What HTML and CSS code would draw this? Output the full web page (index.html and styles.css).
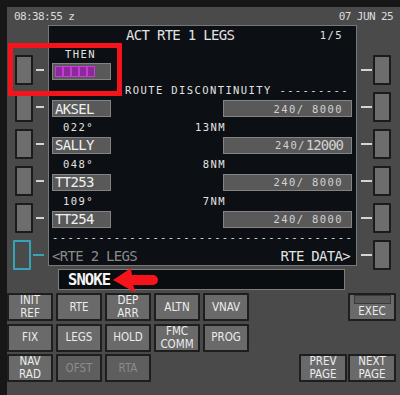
FILE: index.html
```html
<!DOCTYPE html>
<html lang="en">
<head>
    <meta charset="UTF-8">
    <meta name="viewport" content="width=device-width, initial-scale=1.0">
    <title>CDU – ACT RTE 1 LEGS</title>
    <link rel="stylesheet" href="styles.css">
</head>
<body>

    <div class="cdu">
        <div class="status">
            <span>08:38:55 z</span>
            <span>07 JUN 25</span>
        </div>

        <div class="main">
            <div class="lsk-col left">
                <div class="lsk"><span class="lsk-btn"></span><span class="dash"></span></div>
                <div class="lsk"><span class="lsk-btn"></span><span class="dash"></span></div>
                <div class="lsk"><span class="lsk-btn"></span><span class="dash"></span></div>
                <div class="lsk"><span class="lsk-btn"></span><span class="dash"></span></div>
                <div class="lsk"><span class="lsk-btn"></span><span class="dash"></span></div>
                <div class="lsk sel"><span class="lsk-btn"></span><span class="dash"></span></div>
            </div>

            <div class="screen">
                <div class="row">
                    <span class="lg title">ACT RTE 1 LEGS</span>
                    <span class="sm page">1/5</span>
                </div>
                <div class="row"><span class="sm then">THEN</span></div>
                <div class="row">
                    <span class="field boxes"><i></i><i></i><i></i><i></i><i></i></span>
                </div>
                <div class="row"><span class="sm disc">ROUTE DISCONTINUITY ---------</span></div>
                <div class="row">
                    <span class="field lg">AKSEL</span>
                    <span class="field alt sm">240/ 8000</span>
                </div>
                <div class="row"><span class="sm crs">022°</span><span class="sm dist">13NM</span></div>
                <div class="row">
                    <span class="field lg">SALLY</span>
                    <span class="field alt sm">240/<span class="lg">12000</span></span>
                </div>
                <div class="row"><span class="sm crs">048°</span><span class="sm dist">8NM</span></div>
                <div class="row">
                    <span class="field lg">TT253</span>
                    <span class="field alt sm">240/ 8000</span>
                </div>
                <div class="row"><span class="sm crs">109°</span><span class="sm dist">7NM</span></div>
                <div class="row">
                    <span class="field lg">TT254</span>
                    <span class="field alt sm">240/ 8000</span>
                </div>
                <div class="row"><span class="sm dashes">---------------------------------------</span></div>
                <div class="row">
                    <span class="lg dim">&lt;RTE 2 LEGS</span>
                    <span class="lg rte-data">RTE DATA&gt;</span>
                </div>
            </div>

            <div class="lsk-col right">
                <div class="lsk"><span class="dash"></span><span class="lsk-btn"></span></div>
                <div class="lsk"><span class="dash"></span><span class="lsk-btn"></span></div>
                <div class="lsk"><span class="dash"></span><span class="lsk-btn"></span></div>
                <div class="lsk"><span class="dash"></span><span class="lsk-btn"></span></div>
                <div class="lsk"><span class="dash"></span><span class="lsk-btn"></span></div>
                <div class="lsk"><span class="dash"></span><span class="lsk-btn"></span></div>
            </div>
        </div>

        <div class="scratch-row">
            <div class="scratchpad">SNOKE</div>
        </div>

        <div class="keypad">
            <div class="fn-keys">
                <div class="key">INIT<br>REF</div>
                <div class="key">RTE</div>
                <div class="key">DEP<br>ARR</div>
                <div class="key">ALTN</div>
                <div class="key">VNAV</div>
                <div class="key">FIX</div>
                <div class="key">LEGS</div>
                <div class="key">HOLD</div>
                <div class="key">FMC<br>COMM</div>
                <div class="key">PROG</div>
                <div class="key">NAV<br>RAD</div>
                <div class="key off">OFST</div>
                <div class="key off">RTA</div>
            </div>
            <div class="page-keys">
                <div class="key exec"><span class="exec-light"></span>EXEC</div>
                <div class="key prev">PREV<br>PAGE</div>
                <div class="key next">NEXT<br>PAGE</div>
            </div>
        </div>

        <div class="mark-box"></div>
        <svg class="mark-arrow" width="56" height="34" viewBox="108 262 56 34">
            <path d="M113 280 L131 268 L132 275 L153 275 A5 5 0 0 1 153 285 L133 285 L136 293 Z" fill="#f5141b"/>
        </svg>
    </div>

</body>
</html>
```

FILE: styles.css
```css
body {
    margin: 0;
    padding: 0;
    background-color: #171717;
    width: 400px;
    height: 395px;
    overflow: hidden;
}
.cdu {
    position: relative;
    margin: 7px 0 0 7px;
    width: 393px;
    height: 388px;
    background-color: #4a4a4a;
    font-family: 'DejaVu Sans Mono', monospace;
}
.status {
    height: 18px;
    display: flex;
    justify-content: space-between;
    align-items: center;
    padding: 0 7px;
    font-size: 11px;
    letter-spacing: -0.6px;
    color: #dcdcdc;
}
.main {
    display: flex;
    height: 241px;
}
.lsk-col {
    display: flex;
    flex-direction: column;
    gap: 7px;
    padding-top: 30px;
}
.lsk-col.left {
    width: 41px;
}
.lsk-col.right {
    width: 43px;
}
.lsk {
    height: 30px;
    display: flex;
    align-items: center;
    flex-shrink: 0;
}
.lsk-btn {
    width: 18px;
    height: 30px;
    box-sizing: border-box;
    background-color: #6d6d6d;
    border: 2px solid #1b1b1b;
    border-radius: 1px;
}
.left .lsk-btn {
    margin-left: 8px;
}
.left .dash {
    margin-left: 3px;
    width: 8px;
}
.right .dash {
    margin-left: 4px;
    margin-right: 1px;
    width: 11px;
}
.dash {
    height: 2px;
    background-color: #d4d4d4;
}
.lsk.sel .lsk-btn {
    margin-left: 6px;
    background-color: transparent;
    border: 2px solid #35a3b8;
}
.lsk.sel .dash {
    margin-left: 2px;
    width: 11px;
    background-color: #35a3b8;
}

/* display */
.screen {
    width: 309px;
    height: 241px;
    box-sizing: border-box;
    background-color: #0c0f13;
    border: 1px solid #777;
    display: grid;
    grid-template-rows: repeat(13, 1fr);
    color: #e2e2e2;
}
.row {
    display: flex;
    align-items: center;
    white-space: pre;
}
.lg {
    font-size: 14px;
    letter-spacing: -0.7px;
}
.sm {
    font-size: 10.5px;
    letter-spacing: 1.4px;
}
.title {
    margin-left: 77px;
}
.page {
    margin-left: auto;
    margin-right: 13px;
}
.then {
    margin-left: 16px;
}
.disc {
    margin-left: 76px;
}
.field {
    margin-left: 3px;
    width: 59px;
    height: 17px;
    box-sizing: border-box;
    display: flex;
    align-items: center;
    padding-left: 2px;
    background-color: #595959;
    border: 1px solid #838383;
    color: #f0f0f0;
}
.field.alt {
    margin-left: auto;
    margin-right: 4px;
    width: 129px;
    justify-content: flex-end;
    padding-right: 8px;
    color: #d2d2d2;
}
.field.alt .lg {
    letter-spacing: -1px;
}
.boxes {
    gap: 0;
    padding-left: 2px;
}
.boxes i {
    width: 8px;
    height: 11px;
    box-sizing: border-box;
    background-color: #8c2a9c;
    border: 1px solid #c83ad8;
}
.crs {
    margin-left: 14px;
    width: 100px;
}
.dist {
    width: 63px;
    text-align: right;
}
.dashes {
    margin-left: 3px;
    overflow: hidden;
    width: 300px;
}
.dim {
    margin-left: 3px;
    color: #8a8a8a;
}
.rte-data {
    margin-left: auto;
    margin-right: 6px;
}

/* scratchpad */
.scratch-row {
    padding: 3px 0 0 51px;
}
.scratchpad {
    width: 287px;
    height: 21px;
    box-sizing: border-box;
    background-color: #0a0d10;
    border: 1px solid #7d7d7d;
    padding-left: 9px;
    display: flex;
    align-items: center;
    color: #f4f4f4;
    font-size: 15.5px;
    font-weight: bold;
    letter-spacing: -0.9px;
}

/* keys */
.keypad {
    display: flex;
    justify-content: space-between;
    margin-top: 3px;
}
.fn-keys {
    display: grid;
    grid-template-columns: repeat(5, 46px);
    grid-auto-rows: 28px;
    column-gap: 3px;
    row-gap: 2.5px;
}
.page-keys {
    display: grid;
    grid-template-columns: repeat(2, 48px);
    grid-template-rows: repeat(3, 28px);
    column-gap: 1px;
    row-gap: 2.5px;
    margin-right: 4px;
}
.key {
    box-sizing: border-box;
    background-color: #6a6a6a;
    border: 2px solid #1e1e1e;
    border-radius: 1px;
    display: flex;
    flex-direction: column;
    justify-content: center;
    align-items: center;
    text-align: center;
    font-family: 'DejaVu Sans Condensed', 'DejaVu Sans', sans-serif;
    font-stretch: condensed;
    font-size: 11.5px;
    line-height: 13px;
    color: #ececec;
}
.key.off {
    background-color: #5e5e5e;
    color: #8c8c8c;
}
.exec {
    grid-column: 2;
    grid-row: 1;
    justify-content: flex-end;
    padding-bottom: 1px;
}
.exec-light {
    width: 35px;
    height: 8px;
    margin-bottom: 1px;
    background-color: #585858;
    border: 1px solid #3a3a3a;
}
.prev {
    grid-column: 1;
    grid-row: 3;
}
.next {
    grid-column: 2;
    grid-row: 3;
}

/* annotation marks */
.mark-box {
    position: absolute;
    left: 1px;
    top: 36px;
    width: 114px;
    height: 53px;
    box-sizing: border-box;
    border: 5px solid #f5141b;
}
.mark-arrow {
    position: absolute;
    left: 101px;
    top: 255px;
}
```
